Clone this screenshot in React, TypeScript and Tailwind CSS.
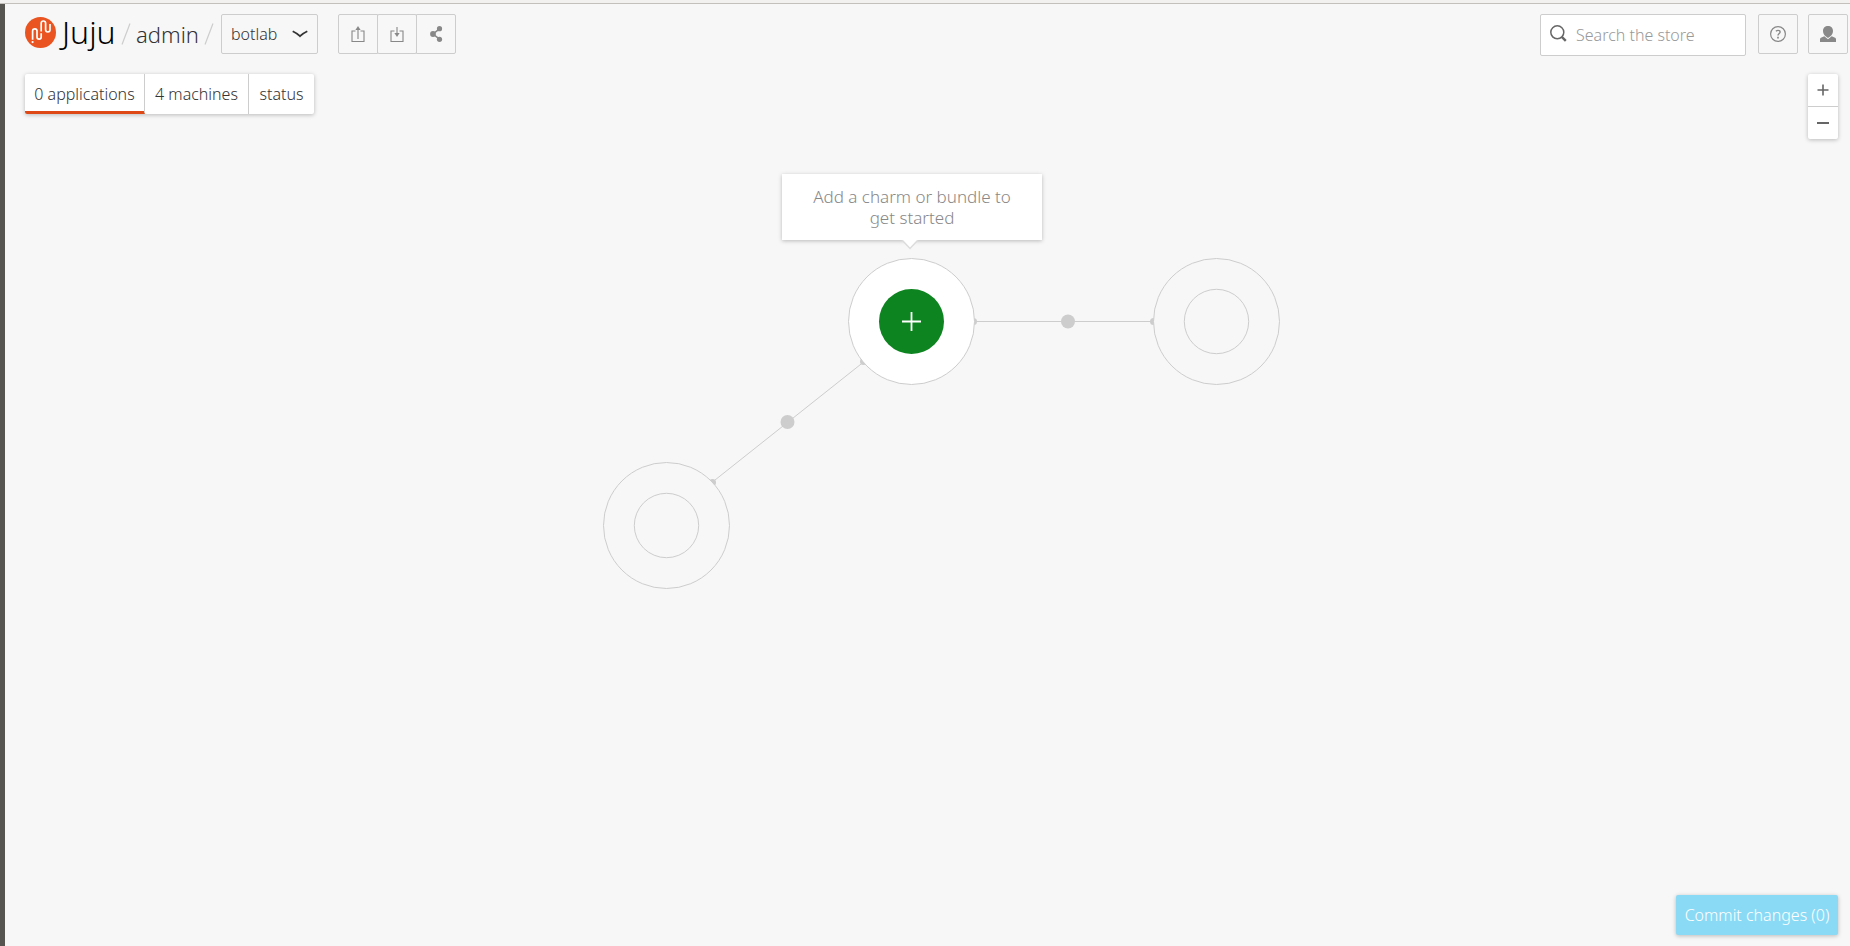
import type { ReactNode } from "react";

const NODE_STROKE = "#cdcdcd";

function Logo() {
  return (
    <svg viewBox="0 0 31 31" className="size-[31px]" aria-hidden="true">
      <circle cx="15.5" cy="15.5" r="15.5" fill="#e95420" />
      <g fill="none" stroke="#fff" strokeWidth="1.7">
        <path d="M7.600 22.800V14a2.200 2.200 0 0 1 4.400 0v6a2.100 2.100 0 0 0 4.200 0v-3.800" />
        <path d="M16.200 14.600V6.200a2.200 2.200 0 0 1 4.400 0v6.600a2.200 2.200 0 0 0 4.400 0V7" />
      </g>
      <circle cx="7.600" cy="25.100" r="1.100" fill="#fff" />
    </svg>
  );
}

function Slash() {
  return (
    <svg viewBox="0 0 10 22" className="h-[22px] w-[10px]" aria-hidden="true">
      <path d="M9 0.5L1 21.5" stroke="#cdcdcd" strokeWidth="1.2" fill="none" />
    </svg>
  );
}

function IconButton({ label, className = "", children }: { label: string; className?: string; children: ReactNode }) {
  return (
    <button
      type="button"
      aria-label={label}
      className={`flex size-10 items-center justify-center rounded-xs border border-[#cdcdcd] text-[#888] ${className}`}
    >
      {children}
    </button>
  );
}

function ExportIcon() {
  return (
    <svg viewBox="0 0 16 16" className="size-4" aria-hidden="true">
      <path d="M5.500 5H2v10.500h12V5h-3.500M8 13V3" fill="none" stroke="currentColor" strokeWidth="1.100" />
      <path d="M8 0l2.600 4H5.400z" fill="currentColor" />
    </svg>
  );
}

function ImportIcon() {
  return (
    <svg viewBox="0 0 16 16" className="size-4" aria-hidden="true">
      <path d="M5.500 5H2v10.500h12V5h-3.500M8 1v7" fill="none" stroke="currentColor" strokeWidth="1.100" />
      <path d="M8 11L5.400 7h5.200z" fill="currentColor" />
    </svg>
  );
}

function ShareIcon() {
  return (
    <svg viewBox="0 0 16 16" className="size-4" aria-hidden="true">
      <path d="M11.500 2.800L5 8l6.500 5.200" fill="none" stroke="currentColor" strokeWidth="1.600" />
      <circle cx="11.500" cy="2.700" r="2.600" fill="currentColor" />
      <circle cx="11.500" cy="13.300" r="2.600" fill="currentColor" />
      <circle cx="5" cy="8" r="2.900" fill="currentColor" />
    </svg>
  );
}

function HelpIcon() {
  return (
    <svg viewBox="0 0 16 16" className="size-4" fill="none" stroke="currentColor" aria-hidden="true">
      <circle cx="8" cy="8" r="7.400" strokeWidth="1.200" />
      <path d="M5.900 5.200c.7-.6 1.500-.8 2.200-.8 1.200 0 2 .6 2 1.600 0 1.500-2.100 1.500-2.100 3.600" strokeWidth="1.400" />
      <path d="M8 10.700v1.700" strokeWidth="1.700" />
    </svg>
  );
}

function UserIcon() {
  return (
    <svg viewBox="0 0 16 16" className="size-4" fill="currentColor" aria-hidden="true">
      <path d="M8 0c2.900 0 5 2 5 4.900 0 2.200-1.100 4.300-2.600 5.300L8 12l-2.400-1.800C4.100 9.200 3 7.100 3 4.900 3 2 5.100 0 8 0z" />
      <path d="M4.300 10.300L8 13.300l3.700-3 2.800 1.100c1 .4 1.500 1 1.500 2V16H0v-2.600c0-1 .5-1.600 1.500-2z" />
    </svg>
  );
}

function Header() {
  return (
    <header className="flex items-start justify-between pt-[10px] pr-[2px] pl-5">
      <div className="flex items-center">
        <a href="#home" className="flex items-center gap-[6px] text-black">
          <span className="-mt-1">
            <Logo />
          </span>
          <span className="-mt-1 w-[55px] text-[32px] leading-8">Juju</span>
        </a>
        <nav aria-label="Breadcrumb" className="flex items-center pl-1">
          <Slash />
          <a href="#admin" className="w-[73px] text-center text-[22px] leading-8">
            admin
          </a>
          <Slash />
        </nav>
        <button
          type="button"
          className="ml-[7px] flex h-10 w-[97px] items-center justify-between rounded-xs border border-[#cdcdcd] px-[9px] text-base"
        >
          botlab
          <svg viewBox="0 0 16 8" className="h-2 w-4" fill="none" stroke="currentColor" strokeWidth="1.800" aria-hidden="true">
            <path d="M0.700 1.200C3.500 2.500 6 4.200 8 6.200c2-2 4.500-3.700 7.300-5" />
          </svg>
        </button>
        <div className="ml-5 flex">
          <IconButton label="Export model" className="rounded-r-none">
            <ExportIcon />
          </IconButton>
          <IconButton label="Import model" className="-ml-px rounded-none">
            <ImportIcon />
          </IconButton>
          <IconButton label="Share model" className="-ml-px rounded-l-none">
            <ShareIcon />
          </IconButton>
        </div>
      </div>
      <div className="flex items-start">
        <form role="search" className="mr-3 flex h-[42px] w-[206px] items-center rounded-xs border border-[#cdcdcd] bg-white pl-[9px]">
          <svg viewBox="0 0 17 17" className="-mt-1 size-[17px] shrink-0" fill="none" stroke="#666" aria-hidden="true">
            <circle cx="7.300" cy="7.300" r="6.500" strokeWidth="1.500" />
            <path d="M11.800 11.800l4 4" strokeWidth="2.400" />
          </svg>
          <input
            type="text"
            aria-label="Search the store"
            placeholder="Search the store"
            className="w-full min-w-0 pl-[9px] text-base font-light outline-none placeholder:text-[#999]"
          />
        </form>
        <IconButton label="Help" className="mr-[10px]">
          <HelpIcon />
        </IconButton>
        <IconButton label="Account">
          <UserIcon />
        </IconButton>
      </div>
    </header>
  );
}

function Toolbar() {
  return (
    <div className="flex items-start justify-between pt-[18px] pr-3 pl-5">
      <div role="tablist" className="flex h-10 rounded-xs bg-white text-base shadow-[0_1px_4px_rgba(0,0,0,0.25)]">
        <button type="button" role="tab" aria-selected="true" className="w-[120px] rounded-l-xs border-r border-b-3 border-r-[#cdcdcd] border-b-[#dd4814] pt-[3px]">
          0 applications
        </button>
        <button type="button" role="tab" aria-selected="false" className="w-[104px] border-r border-[#cdcdcd]">
          4 machines
        </button>
        <button type="button" role="tab" aria-selected="false" className="w-[65px]">
          status
        </button>
      </div>
      <div className="flex w-[30px] flex-col rounded-xs bg-white text-[#666] shadow-[0_1px_4px_rgba(0,0,0,0.25)]">
        <button type="button" aria-label="Zoom in" className="flex h-[33px] items-center justify-center border-b border-[#cdcdcd]">
          <svg viewBox="0 0 12 12" className="size-3" stroke="currentColor" strokeWidth="1.600" aria-hidden="true">
            <path d="M0.500 6h11M6 0.500v11" />
          </svg>
        </button>
        <button type="button" aria-label="Zoom out" className="flex h-8 items-center justify-center">
          <svg viewBox="0 0 12 12" className="size-3" stroke="currentColor" strokeWidth="2" aria-hidden="true">
            <path d="M0 6h12" />
          </svg>
        </button>
      </div>
    </div>
  );
}

function Canvas() {
  return (
    <main className="relative mx-auto mt-[35px] h-[416px] w-[721px]">
      <svg viewBox="567 174 721 416" className="size-full" fill="none" stroke={NODE_STROKE} aria-hidden="true">
        <path d="M974 321.500H1153M863 362.500L712.500 482" />
        <g fill={NODE_STROKE} stroke="none">
          <circle cx="1068" cy="321.500" r="7" />
          <circle cx="787.500" cy="422" r="7" />
          <circle cx="973.500" cy="321.500" r="3.500" />
          <circle cx="1153.500" cy="321.500" r="3.500" />
          <circle cx="863.500" cy="361.500" r="3.500" />
          <circle cx="712.500" cy="482.500" r="3.500" />
        </g>
        <circle cx="911.500" cy="321.500" r="63" fill="#fff" />
        <circle cx="1216.500" cy="321.500" r="63" fill="#f7f7f7" />
        <circle cx="1216.500" cy="321.500" r="32.200" />
        <circle cx="666.500" cy="525.500" r="63" fill="#f7f7f7" />
        <circle cx="666.500" cy="525.500" r="32.200" />
      </svg>
      <div className="absolute top-0 left-[215px] flex w-[260px] justify-center bg-white px-6 py-3 text-center text-[17px] leading-[21px] font-light text-[#888] shadow-[0_1px_4px_rgba(0,0,0,0.25)]">
        <p>
          Add a charm or bundle to
          <br />
          get started
        </p>
        <svg viewBox="0 0 18 10" className="absolute top-full left-[119px] h-[10px] w-[18px]" aria-hidden="true">
          <path d="M1 0l8 8.500L17 0" fill="#fff" stroke="#dcdcdc" strokeWidth="1.500" />
        </svg>
      </div>
      <button
        type="button"
        aria-label="Add a charm or bundle"
        className="absolute top-[115px] left-[312px] flex size-[65px] items-center justify-center rounded-full bg-[#0e8420] text-white"
      >
        <svg viewBox="0 0 19 19" className="size-[19px]" stroke="currentColor" strokeWidth="1.800" aria-hidden="true">
          <path d="M0 9.500h19M9.500 0v19" />
        </svg>
      </button>
    </main>
  );
}

export default function App() {
  return (
    <div className="flex min-h-screen flex-col bg-[#f7f7f7] font-['Noto_Sans','Open_Sans',sans-serif] font-light text-[#333]">
      <div className="h-1 border-b border-[#c3c0bc] bg-[#f2f1f0]" />
      <div className="flex flex-1 flex-col border-l-5 border-[#565550]">
        <Header />
        <Toolbar />
        <Canvas />
        <button
          type="button"
          className="mt-auto mr-3 mb-[11px] h-10 w-[162px] self-end rounded-xs bg-[#8bdaf5] text-base text-white shadow-[0_1px_4px_rgba(0,0,0,0.25)]"
        >
          Commit changes (0)
        </button>
      </div>
    </div>
  );
}
